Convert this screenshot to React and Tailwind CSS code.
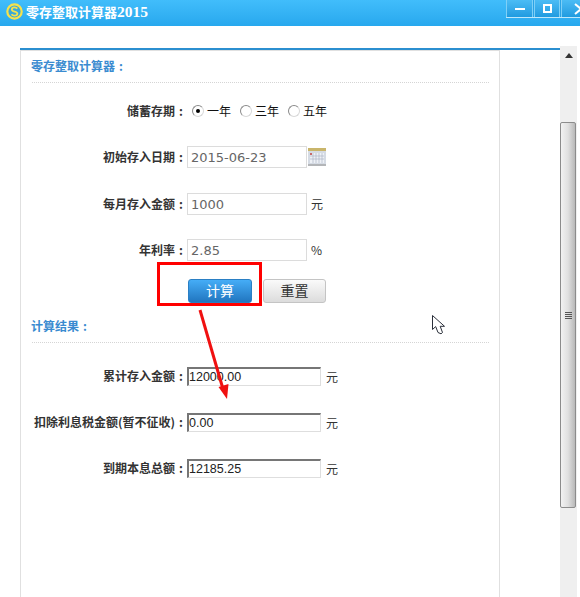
const cjk = "font-['Noto_Sans_CJK_SC','Microsoft_YaHei',sans-serif]";

function Logo() {
  return (
    <svg width="17" height="17" viewBox="0 0 17 17" className="shrink-0">
      <circle cx="8.5" cy="8.5" r="7.2" fill="#3aa8d8" stroke="#f6e24c" strokeWidth="2.2" />
      <path d="M11.3 5.6C10.6 4.7 9.6 4.3 8.5 4.3 7 4.3 5.8 5.1 5.8 6.4c0 2.9 5.6 1.4 5.6 4.2 0 1.3-1.3 2.1-2.9 2.1-1.2 0-2.3-.5-3-1.4" fill="none" stroke="#f6e24c" strokeWidth="1.8" />
    </svg>
  );
}

function WindowButtons() {
  return (
    <div className="flex h-[18px] gap-px self-start border-b border-[#bfe8fb] bg-[#2aa3e6]">
      <div className="flex w-[27px] items-center justify-center border-x border-[#7fd0f7] bg-gradient-to-b from-[#4bbcf5] to-[#1f9be0]">
        <div className="h-[2px] w-[10px] bg-white" />
      </div>
      <div className="flex w-[26px] items-center justify-center border-x border-[#7fd0f7] bg-gradient-to-b from-[#4bbcf5] to-[#1f9be0]">
        <div className="h-[9px] w-[9px] border-2 border-white" />
      </div>
      <div className="flex w-[19px] items-center justify-start border-l border-[#7fd0f7] bg-gradient-to-b from-[#4bbcf5] to-[#1f9be0] pl-[13px]">
        <svg width="6" height="10" viewBox="0 0 6 10" className="shrink-0 overflow-visible">
          <path d="M0 0l6 5-6 5M10 0L6 5l4 5" fill="none" stroke="#fff" strokeWidth="2" />
        </svg>
      </div>
    </div>
  );
}

function Radio({ checked, label }) {
  return (
    <div className="flex items-center">
      <div className="flex h-3 w-3 items-center justify-center rounded-full border border-[#8a8a8a] border-b-[#d8d8d8] border-r-[#d8d8d8] bg-white">
        {checked && <div className="h-1 w-1 rounded-full bg-black" />}
      </div>
      <span className="ml-[3px] w-[33px] text-[12px] text-[#111]">{label}</span>
    </div>
  );
}

function Row({ label, className = '', children }) {
  return (
    <div className={`flex items-center ${className}`}>
      <label className="flex w-[166px] justify-end whitespace-nowrap pb-px text-[12px] font-semibold text-[#333]">
        {label}
        <span className="w-[12px] text-center">:</span>
      </label>
      {children}
    </div>
  );
}

function Field({ value }) {
  return (
    <div className="flex h-[22px] w-[120px] items-center border border-[#dcdcdc] pl-[3px] pt-px font-['DejaVu_Sans',sans-serif] text-[13px] text-[#666]">
      {value}
    </div>
  );
}

function ResultField({ value }) {
  return (
    <div className="flex h-[19px] w-[134px] items-center border-l-2 border-t-2 border-b border-r border-l-[#767676] border-t-[#767676] border-b-[#dedede] border-r-[#dedede] font-['Liberation_Sans',sans-serif] text-[12.5px] text-[#222]">
      {value}
    </div>
  );
}

function Unit({ className = 'ml-[5px]', children }) {
  return <span className={`text-[12px] text-[#333] ${className}`}>{children}</span>;
}

function SectionTitle({ children, className = '' }) {
  return (
    <div className={`ml-[11px] mr-[10px] border-b border-dotted border-[#d5d5d5] text-[12px] font-semibold text-[#3a8bd0] ${className}`}>
      <span className="-ml-px flex">
        {children}
        <span className="w-[12px] text-center">:</span>
      </span>
    </div>
  );
}

function CalendarIcon() {
  return (
    <svg width="18" height="18" viewBox="0 0 18 18" className="ml-px shrink-0">
      <rect x="0" y="0" width="18" height="18" fill="#d5dbe4" />
      <rect x="0" y="0" width="18" height="3" fill="#c9b56b" />
      <rect x="0" y="16" width="18" height="2" fill="#b3b5b8" />
      <rect x="2" y="5" width="14" height="10" fill="#eef1f6" />
      <path d="M5 5v10M8 5v10M11 5v10M14 5v10M2 8h14M2 11h14" stroke="#aeb6c6" strokeWidth="0.7" />
      <rect x="2" y="5" width="2" height="2" fill="#c86a6a" />
    </svg>
  );
}

function Scrollbar() {
  return (
    <div className="mr-[3px] mt-[20px] flex w-[17px] flex-col bg-[#efefef]">
      <div className="flex h-[76px] justify-center pt-[7px]">
        <div className="h-0 w-0 border-x-[4px] border-b-[5px] border-x-transparent border-b-[#333]" />
      </div>
      <div className="flex h-[386px] w-[16px] items-center justify-center rounded-[2px] border border-[#8c8c8c] bg-gradient-to-r from-[#f2f2f2] via-[#e0e0e0] to-[#b9b9b9]">
        <div className="flex w-[7px] flex-col gap-px">
          <div className="h-px bg-[#555]" />
          <div className="h-px bg-[#555]" />
          <div className="h-px bg-[#555]" />
          <div className="h-px bg-[#555]" />
        </div>
      </div>
    </div>
  );
}

export default function App() {
  return (
    <div className={`relative h-[597px] w-[580px] overflow-hidden bg-white ${cjk}`}>
      <div className="flex h-[26px] items-start bg-gradient-to-b from-[#41bdfb] to-[#27a8ee]">
        <div className="mt-[3px] flex h-[17px] flex-1 items-center pl-[6px]">
          <Logo />
          <span className="ml-[3px] text-[13px] font-semibold leading-[17px] text-white">
            零存整取计算器
            <span className="font-['Liberation_Serif',serif] text-[15.5px] font-bold">2015</span>
          </span>
        </div>
        <WindowButtons />
      </div>

      <div className="flex h-[571px]">
        <div className="ml-[20px] mt-[22px] flex-1 border-t-2 border-[#2b8fd0]">
          <div className="h-full w-[480px] border-x border-t border-[#e0e0e0]">
            <SectionTitle className="h-[32px] pt-[6px]">零存整取计算器</SectionTitle>

            <Row label="储蓄存期" className="mt-[17px] h-[22px]">
              <div className="ml-[5px] flex">
                <Radio checked label="一年" />
                <Radio label="三年" />
                <Radio label="五年" />
              </div>
            </Row>
            <Row label="初始存入日期" className="mt-[24px]">
              <Field value="2015-06-23" />
              <CalendarIcon />
            </Row>
            <Row label="每月存入金额" className="mt-[25px]">
              <Field value="1000" />
              <Unit className="ml-[4px]">元</Unit>
            </Row>
            <Row label="年利率" className="mt-[24px]">
              <Field value="2.85" />
              <Unit className="ml-[4px]">%</Unit>
            </Row>

            <div className="ml-[167px] mt-[18px] flex gap-[11px]">
              <button className="h-[24px] w-[64px] rounded-[3px] border border-[#2a7fc4] bg-gradient-to-b from-[#45adf7] to-[#2176c0] pb-[2px] text-[14px] leading-none text-white">计算</button>
              <button className="h-[24px] w-[63px] rounded-[3px] border border-[#c4c4c4] bg-gradient-to-b from-[#fafafa] to-[#dcdcdc] pb-[2px] text-[14px] leading-none text-[#333]">重置</button>
            </div>

            <SectionTitle className="mt-[14px] h-[26px]">计算结果</SectionTitle>

            <Row label="累计存入金额" className="mt-[24px]">
              <ResultField value="12000.00" />
              <Unit>元</Unit>
            </Row>
            <Row label="扣除利息税金额(暂不征收)" className="mt-[27px]">
              <ResultField value="0.00" />
              <Unit>元</Unit>
            </Row>
            <Row label="到期本息总额" className="mt-[27px]">
              <ResultField value="12185.25" />
              <Unit>元</Unit>
            </Row>
          </div>
        </div>
        <Scrollbar />
      </div>

      {/* annotation drawn over the screenshot */}
      <div className="absolute left-[157px] top-[262px] h-[44px] w-[105px] border-[3px] border-[#ff0000]" />
      <svg className="absolute left-[190px] top-[305px]" width="50" height="100" viewBox="0 0 50 100">
        <path d="M10 5L33 84" stroke="#f01010" strokeWidth="3" fill="none" />
        <path d="M37 94L28.5 82 38.5 79Z" fill="#f01010" />
      </svg>
      <svg className="absolute left-[432px] top-[315px]" width="14" height="20" viewBox="0 0 14 20">
        <path d="M0.5 0.5V14.5L3.7 11.6 6 17.5 9 18.8 10.5 17.5 8.2 11.3H12.5Z" fill="#fff" stroke="#2a2f3a" strokeWidth="1" />
      </svg>
    </div>
  );
}
